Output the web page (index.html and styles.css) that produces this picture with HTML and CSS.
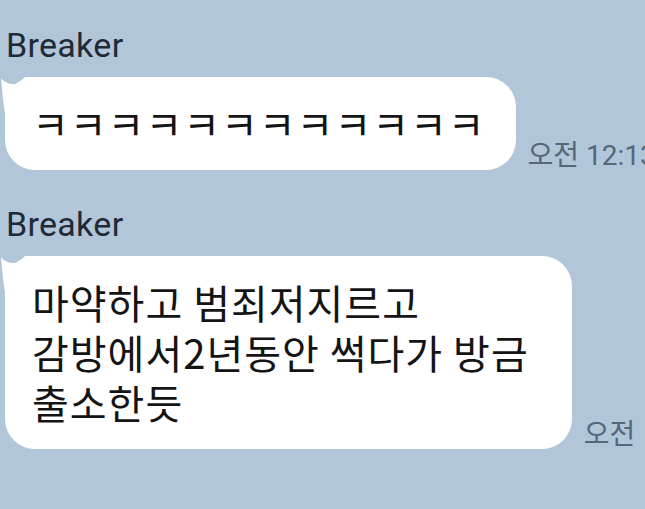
FILE: index.html
```html
<!DOCTYPE html>
<html>
<head>
  <title>Chat</title>
  <link rel="stylesheet" href="styles.css">
</head>
<body>
  <div class="chat">
    <div class="msg">
      <div class="name">Breaker</div>
      <div class="row">
        <div class="bubble">
          <svg class="tail" width="32" height="36" viewBox="0 0 32 36"><path d="M1 1 C4 5 9 7 14 7 C19 7 22 3 25 0 L32 0 L32 36 L5 36 C3 25 2 11 1 1 Z" fill="#fff"/></svg>
          ㅋㅋㅋㅋㅋㅋㅋㅋㅋㅋㅋㅋ
        </div>
        <div class="time">오전 12:13</div>
      </div>
    </div>

    <div class="msg">
      <div class="name">Breaker</div>
      <div class="row">
        <div class="bubble wide">
          <svg class="tail" width="32" height="36" viewBox="0 0 32 36"><path d="M1 1 C4 5 9 7 14 7 C19 7 22 3 25 0 L32 0 L32 36 L5 36 C3 25 2 11 1 1 Z" fill="#fff"/></svg>
          마약하고 범죄저지르고<br>감방에서2년동안 썩다가 방금<br>출소한듯
        </div>
        <div class="time">오전</div>
      </div>
    </div>
  </div>
</body>
</html>
```

FILE: styles.css
```css
body {
  margin: 0;
  background-color: #b2c6da;
  font-family: Roboto, "Noto Sans CJK KR", sans-serif;
  overflow: hidden;
}

.chat {
  display: flex;
  flex-direction: column;
  gap: 34px;
  padding: 25px 0 0 5px;
}

.name {
  font-size: 34px;
  line-height: 40px;
  letter-spacing: 0.3px;
  color: #1f2a36;
  margin-bottom: 12px;
  padding-left: 1px;
}

.row {
  display: flex;
  align-items: flex-end;
  gap: 12px;
  white-space: nowrap;
}

.bubble {
  position: relative;
  background: #fff;
  border-radius: 30px;
  padding: 21px 30px 22px 27px;
  font-family: "Noto Sans CJK KR", Roboto, sans-serif;
  font-size: 40px;
  line-height: 50px;
  letter-spacing: 1px;
  color: #141414;
}

.bubble.wide {
  padding-right: 43px;
}

.tail {
  position: absolute;
  left: -5px;
  top: 0;
}

.time {
  font-size: 28px;
  line-height: 28px;
  color: #56677a;
}
```
